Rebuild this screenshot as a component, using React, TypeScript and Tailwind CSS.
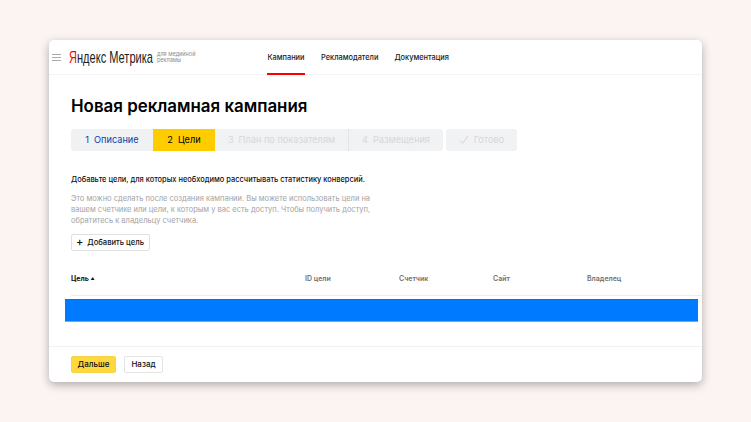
const steps = [
  { label: "Описание", n: "1", className: "w-[82px] bg-[#f0f1f3] text-[#0b3fa8] rounded-l-[3px]" },
  { label: "Цели", n: "2", className: "w-[62px] bg-[#ffcc00] text-black" },
  { label: "План по показателям", n: "3", className: "w-[133px] bg-[#f1f2f3] text-[#d6d8da]" },
  { label: "Размещения", n: "4", className: "w-[95px] bg-[#f1f2f3] text-[#d6d8da] border-l border-[#e2e3e5] rounded-r-[3px]" },
];

const columns = ["ID цели", "Счетчик", "Сайт", "Владелец"];

const App = () => {
  return (
    <div className="w-[751px] h-[422px] overflow-hidden bg-[#fbf4f3] pt-10 pl-[49px] font-['Inter','Liberation_Sans',sans-serif]">
      <div className="w-[653px] h-[342px] flex flex-col bg-white rounded-[5px] shadow-[0_3px_10px_rgba(0,0,0,0.3)]">
        <header className="h-[35px] shrink-0 flex items-stretch border-b border-[#f3f3f3] pl-[3px]">
          <div className="w-[9px] flex flex-col justify-center gap-[2px]">
            <span className="h-px bg-[#a9a9a9]" />
            <span className="h-px bg-[#a9a9a9]" />
            <span className="h-px bg-[#a9a9a9]" />
          </div>
          <div className="ml-[8px] w-[83px] flex items-center whitespace-nowrap text-[17px] leading-none text-[#222] font-['Liberation_Sans',sans-serif]">
            <span className="origin-left scale-x-[0.65] inline-block">
              <span className="text-[#f00]">Я</span>ндекс Метрика
            </span>
          </div>
          <div className="ml-[5px] w-[42px] flex items-center text-[5.5px] leading-[6.5px] text-[#8b8b8b]">
            для медийной рекламы
          </div>
          <nav className="ml-[68px] flex gap-[16px] text-[7.4px] font-medium text-[#1a1a1a]">
            <a className="relative flex items-center pt-[2px] px-[0.5px]">
              Кампании
              <span className="absolute left-0 right-0 bottom-[-1px] h-[2px] bg-[#f00]" />
            </a>
            <a className="flex items-center pt-[2px]">Рекламодатели</a>
            <a className="flex items-center pt-[2px]">Документация</a>
          </nav>
        </header>

        <main className="flex-1 min-h-0 flex flex-col pl-[22px]">
          <h1 className="mt-5 text-[16.9px] leading-[22px] font-semibold text-black">
            Новая рекламная кампания
          </h1>

          <div className="mt-[12px] flex h-[22px] text-[9.2px] font-normal">
            {steps.map((s) => (
              <div key={s.n} className={`flex items-center justify-center gap-[5px] whitespace-nowrap ${s.className}`}>
                <span>{s.n}</span>
                <span>{s.label}</span>
              </div>
            ))}
            <div className="ml-[3px] w-[71px] flex items-center justify-center gap-[5px] rounded-[3px] bg-[#f1f2f3] text-[#d6d8da]">
              <svg width="10" height="10" viewBox="0 0 10 10" fill="none" stroke="#cfd1d3" strokeWidth="0.9">
                <path d="M1 5.5 L3.5 8.5 L9 1" />
              </svg>
              <span>Готово</span>
            </div>
          </div>

          <p className="mt-[23px] text-[7.45px] leading-3 font-medium text-[#111] whitespace-nowrap">
            Добавьте цели, для которых необходимо рассчитывать статистику конверсий.
          </p>
          <p className="mt-[7px] w-[305px] text-[7.5px] leading-[11px] text-[#a3a3a3]">
            Это можно сделать после создания кампании. Вы можете использовать цели на вашем счетчике или цели, к которым у вас есть доступ. Чтобы получить доступ, обратитесь к владельцу счетчика.
          </p>
          <button className="mt-[8px] w-[79px] h-[17px] flex items-center pl-[4px] gap-[4px] rounded-[2px] border border-[#e0e0e0] bg-white text-[7.6px] font-medium text-[#111] whitespace-nowrap">
            <span className="text-[11px] leading-none">+</span>
            Добавить цель
          </button>

          <div className="mt-[23px] h-[22px] grid grid-cols-[234px_94px_94px_94px_1fr] border-b border-[#ececec] text-[7px] font-semibold text-[#6f6f6f]">
            <div className="font-bold text-[#111]">
              Цель <span className="text-[4px] align-middle">▲</span>
            </div>
            {columns.map((c) => (
              <div key={c}>{c}</div>
            ))}
          </div>

          <div className="mt-[3px] -ml-[6px] w-[633px] h-[23px] shrink-0 bg-[#007bff] border-t border-[#0a6fe8] border-b border-b-[#6ea8f7]" />
        </main>

        <footer className="h-[36px] shrink-0 flex items-center gap-2 border-t border-[#f1f1f1] pl-[22px] pb-[1px]">
          <button className="w-[45px] h-[17px] rounded-[2px] bg-[#ffd83d] border border-[#f7d34a] text-[8px] font-medium text-[#111]">
            Дальше
          </button>
          <button className="w-[39px] h-[17px] rounded-[2px] bg-white border border-[#e3e3e3] text-[8px] font-medium text-[#111]">
            Назад
          </button>
        </footer>
      </div>
    </div>
  );
};

export default App;
